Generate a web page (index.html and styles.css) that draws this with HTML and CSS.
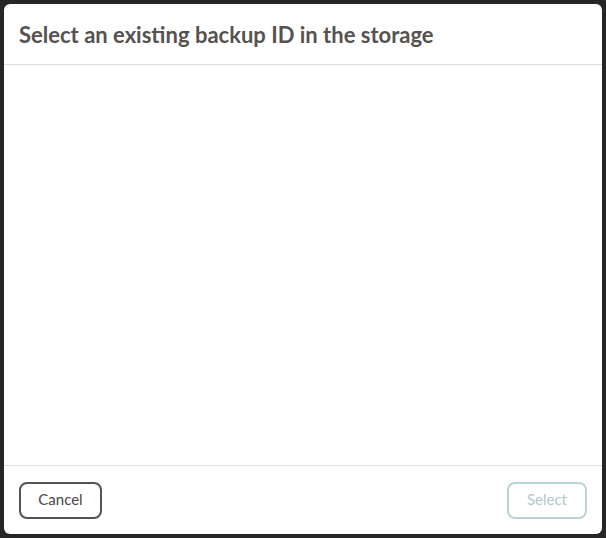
FILE: index.html
```html
<!DOCTYPE html>
<html>
<head>
<meta charset="utf-8">
<link rel="stylesheet" href="styles.css">
</head>
<body>
<div class="modal">
  <div class="modal-header">
    <h1 class="modal-title">Select an existing backup ID in the storage</h1>
  </div>
  <div class="modal-body"></div>
  <div class="modal-footer">
    <button class="btn btn-cancel">Cancel</button>
    <button class="btn btn-select" disabled>Select</button>
  </div>
</div>
</body>
</html>
```
FILE: styles.css
```css
html, body {
  margin: 0;
  padding: 0;
  height: 100%;
}
body {
  background: #262626;
  font-family: Lato, "Open Sans", sans-serif;
  padding: 4px 4px 4px 4px;
  box-sizing: border-box;
}
.modal {
  background: #fff;
  border-radius: 6px;
  width: 598px;
  height: 530px;
  display: flex;
  flex-direction: column;
  overflow: hidden;
}
.modal-header {
  height: 60px;
  border-bottom: 1px solid #dedede;
  display: flex;
  align-items: center;
  padding: 0 15px;
  flex-shrink: 0;
}
.modal-title {
  margin: 0;
  font-size: 22px;
  font-weight: 700;
  color: #555250;
}
.modal-body {
  flex: 1;
}
.modal-footer {
  border-top: 1px solid #dedede;
  height: 68px;
  flex-shrink: 0;
  display: flex;
  align-items: center;
  justify-content: space-between;
  padding: 0 15px;
}
.btn {
  font-family: Lato, "Open Sans", sans-serif;
  font-size: 15px;
  height: 37px;
  border-radius: 8px;
  background: #fff;
  padding: 0 0 2px 0;
}
.btn-cancel {
  width: 83px;
  border: 2px solid #555250;
  color: #4a4744;
}
.btn-select {
  width: 80px;
  border: 2px solid #bdd3d3;
  color: #b3c9c9;
}
```
